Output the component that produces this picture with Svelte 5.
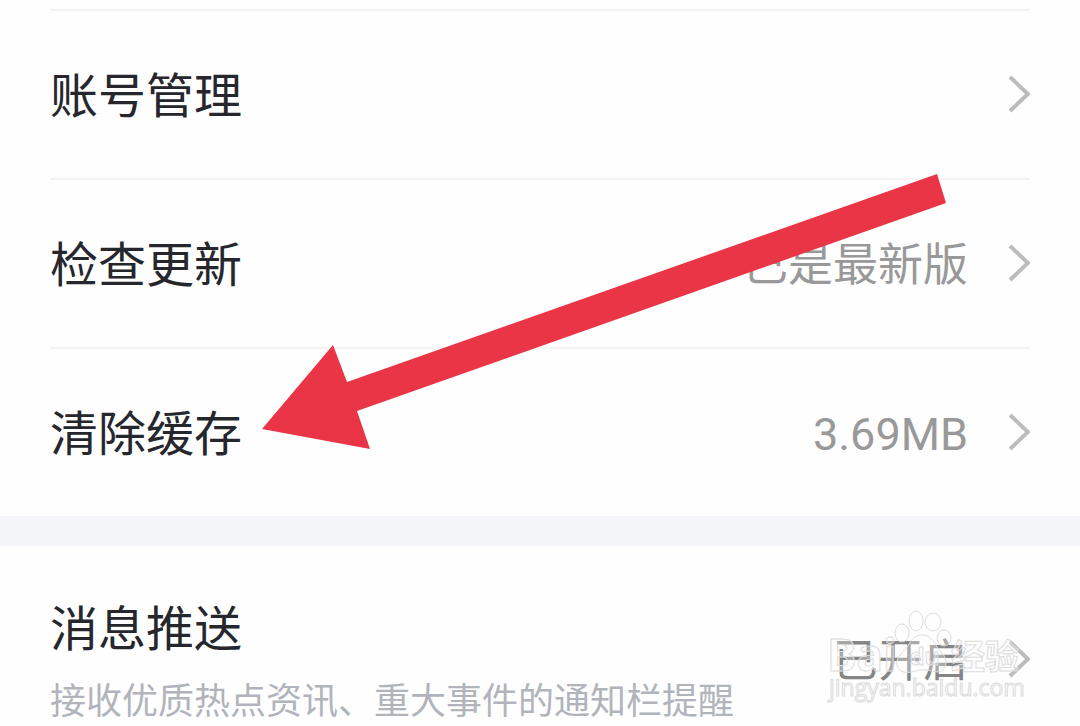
<script lang="ts">
    const settings = [
        { id: "account", label: "账号管理", value: "" },
        { id: "update", label: "检查更新", value: "已是最新版" },
        { id: "cache", label: "清除缓存", value: "3.69MB" },
    ];

    const push = {
        id: "push",
        label: "消息推送",
        description: "接收优质热点资讯、重大事件的通知栏提醒",
        value: "已开启",
    };
</script>

{#snippet chevron()}
    <svg class="chevron" viewBox="0 0 22 40" aria-hidden="true">
        <path d="M2 2 L20 19 L2 36" />
    </svg>
{/snippet}

<main class="page">
    <nav class="group">
        {#each settings as item (item.id)}
            <a class="row" href="#{item.id}">
                <span class="text">
                    <span class="label">{item.label}</span>
                </span>
                <span class="value">{item.value}</span>
                {@render chevron()}
            </a>
        {/each}
    </nav>

    <nav class="group push">
        <a class="row" href="#{push.id}">
            <span class="text">
                <span class="label">{push.label}</span>
                <span class="description">{push.description}</span>
            </span>
            <span class="value dark">{push.value}</span>
            {@render chevron()}
        </a>
    </nav>

    <svg class="arrow" viewBox="0 0 684 275" aria-hidden="true">
        <polygon points="0,255 71,171 85,208 675,0 684,29 95,237 108,275" />
    </svg>

    <svg class="watermark" viewBox="0 0 200 100" aria-hidden="true">
        <g class="outline">
            <text class="brand" x="1" y="66">Bai</text>
            <path d="M96 30 C104 30 108 36 111 42 C115 48 121 51 120 59 C119 67 112 68 105 66 C98 64 92 65 86 67 C77 69 70 65 71 57 C72 49 78 47 82 41 C85 35 89 30 96 30 Z" />
            <ellipse cx="76" cy="28" rx="7" ry="9" />
            <ellipse cx="90" cy="16" rx="7" ry="10" />
            <ellipse cx="107" cy="17" rx="8" ry="9" />
            <ellipse cx="118" cy="33" rx="7" ry="8" />
            <text class="du" x="84" y="60">du</text>
            <text class="brand-cn" x="125" y="64">经验</text>
            <text class="site" x="3" y="91">jingyan.baidu.com</text>
        </g>
    </svg>
</main>

<style>
    :global(body) {
        background: #fefefe;
    }

    .page {
        position: relative;
        box-sizing: border-box;
        height: 100vh;
        padding-top: 9px;
        overflow: hidden;
        font-family: Roboto, "Noto Sans CJK SC", sans-serif;
    }

    .group {
        padding: 0 50px;
    }

    .push {
        border-top: 30px solid #f4f5f8;
    }

    .row {
        display: flex;
        align-items: center;
        box-sizing: border-box;
        min-height: 169px;
        border-top: 2px solid #f3f3f3;
        color: #26272c;
        text-decoration: none;
    }

    .push .row {
        padding: 48px 0;
        border-top: none;
    }

    .text {
        display: flex;
        flex-direction: column;
        gap: 16px;
        padding-top: 4px;
    }

    .label {
        font-size: 48px;
        line-height: 64px;
    }

    .description {
        color: #b1b4bb;
        font-size: 36px;
        line-height: 48px;
        white-space: nowrap;
    }

    .value {
        margin-left: auto;
        padding-top: 4px;
        color: #999;
        font-size: 45px;
        line-height: 64px;
        white-space: nowrap;
    }

    .value.dark {
        color: #858585;
    }

    .chevron {
        flex: none;
        width: 22px;
        height: 40px;
        margin-left: 40px;
        fill: none;
        stroke: #bcbcbc;
        stroke-width: 4;
    }

    .arrow {
        position: absolute;
        top: 174px;
        left: 262px;
        width: 684px;
        height: 275px;
        fill: #ea3546;
    }

    .watermark {
        position: absolute;
        top: 605px;
        left: 826px;
        width: 200px;
        height: 100px;
    }

    .outline {
        fill: #fff;
        fill-opacity: 0.3;
        stroke: #dcdcdc;
        stroke-width: 1;
        font-family: "Open Sans", "Noto Sans CJK SC", sans-serif;
    }

    .brand {
        font-size: 44px;
        font-weight: 700;
    }

    .du {
        font-size: 23px;
        font-weight: 700;
    }

    .brand-cn {
        font-family: "Noto Sans CJK SC", sans-serif;
        font-size: 34px;
        font-weight: 700;
    }

    .site {
        font-size: 23px;
        fill-opacity: 1;
    }
</style>
